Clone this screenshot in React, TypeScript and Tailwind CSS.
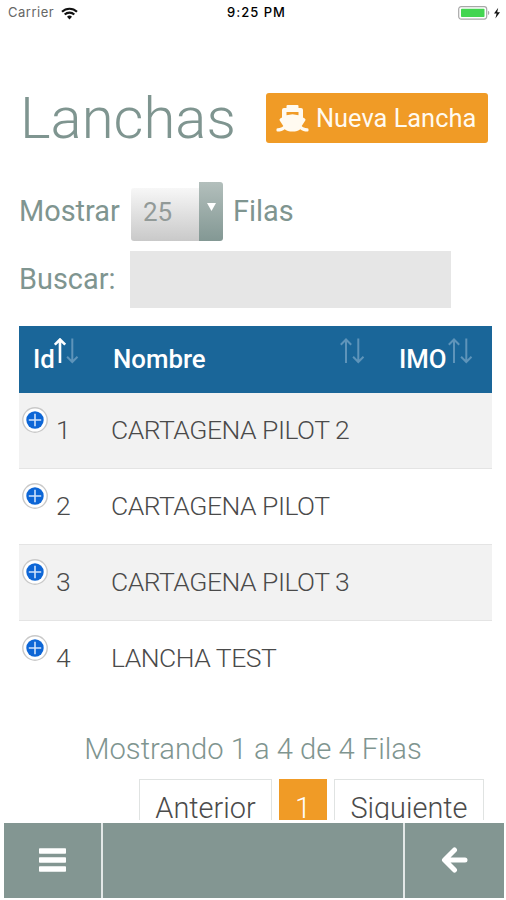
const boats = [
  { id: 1, name: 'CARTAGENA PILOT 2' },
  { id: 2, name: 'CARTAGENA PILOT' },
  { id: 3, name: 'CARTAGENA PILOT 3' },
  { id: 4, name: 'LANCHA TEST' },
]

function StatusBar() {
  return (
    <div className="flex h-[26px] shrink-0 items-center justify-between pl-2 pr-[5px] font-['Inter','Liberation_Sans',sans-serif] text-black">
      <div className="flex w-[110px] items-center gap-[7px]">
        <span className="text-[13px] tracking-[0.5px] text-[#666]">Carrier</span>
        <svg width="17" height="13" viewBox="0 0 17 13" fill="none" stroke="#111" strokeWidth="2.1">
          <path d="M1 4.8a10.6 10.6 0 0 1 15 0" />
          <path d="M3.7 7.6a6.8 6.8 0 0 1 9.6 0" />
          <path d="M8.5 12.4 6 9.8a3.5 3.5 0 0 1 5 0z" fill="#111" stroke="none" />
        </svg>
      </div>
      <span className="ml-1 text-[13px] font-medium tracking-[1px]">9:25 PM</span>
      <div className="flex w-[110px] items-center justify-end">
        <svg width="43" height="14" viewBox="0 0 43 14">
          <rect x="0.7" y="0.7" width="28" height="12.4" rx="2.5" fill="#fff" stroke="#a8a8a8" strokeWidth="1.2" />
          <rect x="3" y="2.8" width="23.5" height="8.3" rx="0.8" fill="#43d551" />
          <path d="M30 4.8c1.8.6 1.8 3.6 0 4.2z" fill="#a8a8a8" />
          <path d="M40.2 1.8 36 7.6h2.6l-1.2 4.8 4.6-6.2h-2.8z" fill="#111" />
        </svg>
      </div>
    </div>
  )
}

function ShipIcon() {
  return (
    <svg width="33" height="27" viewBox="0 0 33 27" fill="#fffaf0">
      <path
        fillRule="evenodd"
        d="M11.500 0h10a1 1 0 0 1 1 1v2H25a2 2 0 0 1 2 2v7.500l1.800 1q1.200.8.5 2l-3.600 5.500c1.200 1.500 3 2 5.500 2.200q1.300.1 1.300 1v1.500q0 .8-1 .8c-3 0-5.400-.7-7.200-2.300-1.800 1.600-4.300 2.300-7.800 2.300s-6-.7-7.800-2.300C6.900 25.800 4.500 26.500 1.500 26.500q-1 0-1-.8v-1.500q0-.9 1.300-1C4.300 23 6.100 22.500 7.300 21l-3.600-5.500q-.7-1.200.5-2l1.800-1V5a2 2 0 0 1 2-2h2.500V1a1 1 0 0 1 1-1zM10.500 7v3.200l6-.9 6 .9V7z"
      />
    </svg>
  )
}

function SortIcon({ active = false }: { active?: boolean }) {
  return (
    <svg width="25" height="26" viewBox="0 0 25 26" fill="none" strokeWidth="2">
      <path d="M6 25V1.5M.8 6.7 6 1.5l5.2 5.2" stroke={active ? '#fff' : '#5e94ba'} strokeWidth={active ? 2.6 : 2} />
      <path d="M18.3 .5V24M13.1 18.8 18.3 24l5.2-5.2" stroke="#5e94ba" />
    </svg>
  )
}

function ExpandIcon() {
  return (
    <svg width="26" height="26" viewBox="0 0 26 26">
      <circle cx="13" cy="13" r="12.2" fill="#fff" stroke="#c9c9c9" strokeWidth="1.4" />
      <circle cx="13" cy="13" r="8.7" fill="#0d66d6" />
      <path d="M13 6.8v12.4M6.8 13h12.4" stroke="#cfe2fb" strokeWidth="1.6" />
    </svg>
  )
}

export default function App() {
  return (
    <div className="h-[900px] w-[506px] overflow-hidden bg-white font-['Roboto',sans-serif] text-[28.9px] text-[#7f9590]">
      <div className="flex h-[820px] flex-col overflow-hidden">
        <StatusBar />

        <div className="mt-[67px] flex h-[50px] shrink-0 items-center justify-between pl-5 pr-[18px]">
          <h1 className="text-[58px] font-light leading-[50px]">Lanchas</h1>
          <button className="flex h-[50px] w-[222px] items-center rounded-[3px] bg-[#f09b26] pl-2.5 text-[25.4px] text-[#fffaf0]">
            <ShipIcon />
            <span className="ml-[7px] whitespace-nowrap">Nueva Lancha</span>
          </button>
        </div>

        <div className="mt-[39px] flex h-[59px] shrink-0 items-center pl-[19px]">
          <span className="w-[112px]">Mostrar</span>
          <div className="flex h-[59px] w-[92px] items-end">
            <div className="flex h-[53px] w-[68px] items-center rounded-l-[3px] bg-linear-to-b from-[#f7f7f7] to-[#c9c9c9] pb-1 pl-3 text-[26px] text-[#929a98]">
              <span>25</span>
            </div>
            <div className="flex h-[59px] w-6 justify-center rounded-r-[3px] bg-linear-to-b from-[#b3bfbc] to-[#839894] pt-[21px]">
              <svg width="9" height="8" viewBox="0 0 9 8">
                <path d="M0 0h9L4.5 8z" fill="#fff" />
              </svg>
            </div>
          </div>
          <span className="ml-2.5">Filas</span>
        </div>

        <div className="mt-[10px] flex h-[57px] shrink-0 items-center pl-[19px]">
          <label htmlFor="search" className="w-[111px]">Buscar:</label>
          <input id="search" className="h-[57px] w-[321px] bg-[#e6e6e6] px-3 outline-none" />
        </div>

        <div className="ml-[19px] mt-[18px] w-[473px] shrink-0">
          <div className="flex h-[67px] bg-[#1a6699] text-[25.8px] font-medium text-white">
            <div className="flex w-20 items-start pl-3.5">
              <span className="leading-[67px]">Id</span>
              <span className="-ml-px mt-[12px]"><SortIcon active /></span>
            </div>
            <div className="flex w-[274px] items-start justify-between pl-3.5 pr-2">
              <span className="leading-[67px]">Nombre</span>
              <span className="mt-[12px]"><SortIcon /></span>
            </div>
            <div className="flex items-start pl-[26px]">
              <span className="leading-[67px]">IMO</span>
              <span className="ml-px mt-[12px]"><SortIcon /></span>
            </div>
          </div>
          {boats.map((boat) => (
            <div
              key={boat.id}
              className="flex h-[76px] border-b border-[#e4e4e4] text-[26.5px] font-light leading-[74px] tracking-[-0.5px] text-[#4a4a4a] last:border-b-0 odd:bg-white even:bg-[#f2f2f2]"
            >
              <span className="w-[37px] pl-[3px] pt-3.5"><ExpandIcon /></span>
              <span className="w-[55px]">{boat.id}</span>
              <span>{boat.name}</span>
            </div>
          ))}
        </div>

        <p className="mt-[35px] shrink-0 text-center text-[29.2px] font-light leading-[34px]">Mostrando 1 a 4 de 4 Filas</p>

        <div className="mt-[13px] flex shrink-0 justify-end gap-[7px] pr-[22px] font-light leading-[56px] text-[#4b4b4b]">
          <button className="h-[58px] w-[133px] border border-[#e0e3e2]">Anterior</button>
          <button className="h-[58px] w-12 bg-[#f09b26] text-white">1</button>
          <button className="h-[58px] w-[150px] border border-[#e0e3e2]">Siguiente</button>
        </div>
      </div>

      <nav className="ml-1 mt-[3px] flex h-[75px] w-[500px] gap-[2px] bg-[#e3e8e7] text-white">
        <button className="flex w-[97px] items-center justify-center bg-[#839692]">
          <svg width="27" height="25" viewBox="0 0 27 25" fill="#fff">
            <rect y="0.3" width="27" height="5.4" rx="0.8" />
            <rect y="9.3" width="27" height="5.4" rx="0.8" />
            <rect y="18.3" width="27" height="5.4" rx="0.8" />
          </svg>
        </button>
        <div className="flex-1 bg-[#839692]" />
        <button className="flex w-[99px] items-center justify-center bg-[#839692]">
          <svg width="27" height="27" viewBox="0 0 27 27" fill="none" stroke="#fff" strokeWidth="5" strokeLinecap="round" strokeLinejoin="round">
            <path d="M24 13H4M13.500 3l-10 10 10 10" />
          </svg>
        </button>
      </nav>
    </div>
  )
}
